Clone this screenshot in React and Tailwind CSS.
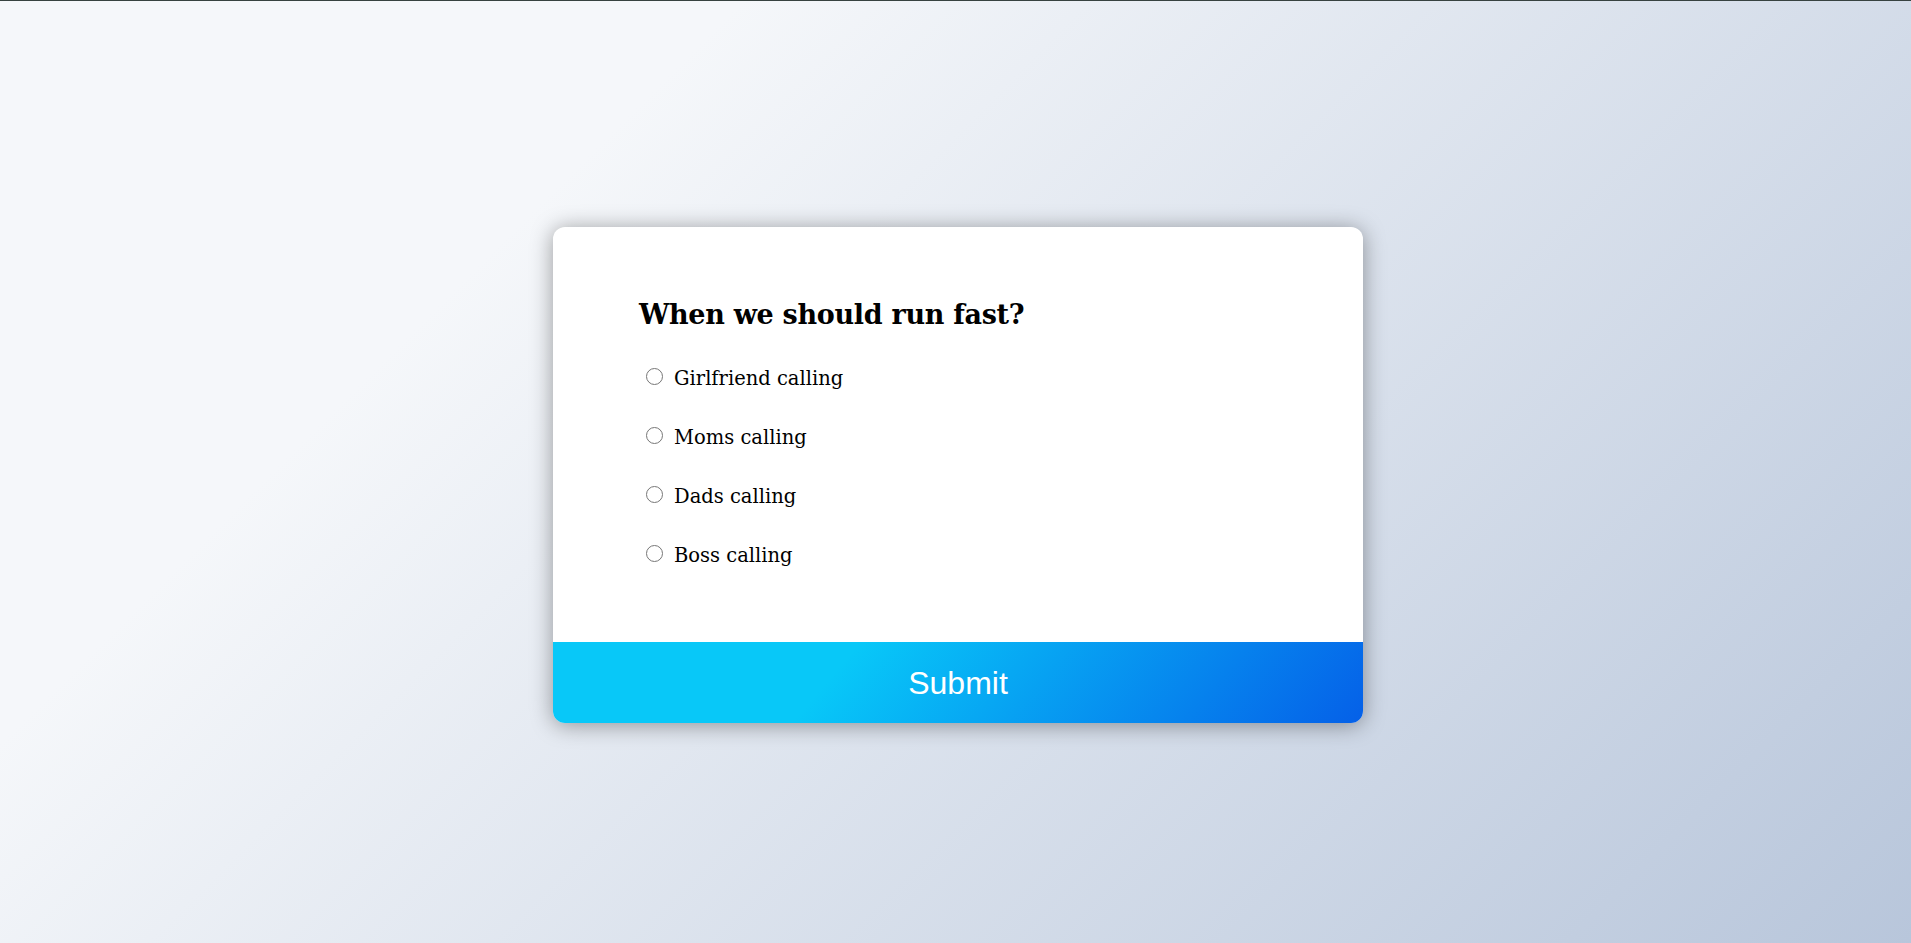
import React, { useState } from 'react';

const options = ['Girlfriend calling', 'Moms calling', 'Dads calling', 'Boss calling'];

export default function App() {
  const [answer, setAnswer] = useState(null);

  return (
    <div className="min-h-screen border-t border-[#374240] bg-[linear-gradient(315deg,#b8c6db_0%,#f5f7fa_74%)] flex justify-center pt-[226px] pb-[219px] pl-[5px]">
      <div className="w-[810px] h-[496px] bg-white rounded-[12px] overflow-hidden shadow-[0_2px_22px_rgba(0,0,0,0.38)] flex flex-col">
        <div className="flex-1 pl-[86px] pt-[68px] font-['DejaVu_Serif',serif] text-black">
          <h2 className="text-[27px] leading-[40px] font-bold tracking-[-0.3px]">When we should run fast?</h2>
          <div className="mt-[33px] flex flex-col gap-[37px]">
            {options.map((opt) => (
              <label key={opt} className="flex items-center gap-[11px] pl-[7px] text-[19.5px] leading-[22px] cursor-pointer">
                <input
                  type="radio"
                  name="q"
                  checked={answer === opt}
                  onChange={() => setAnswer(opt)}
                  className="w-[17px] h-[17px] m-0 -translate-y-[3px] shrink-0"
                />
                <span>{opt}</span>
              </label>
            ))}
          </div>
        </div>
        <button className="h-[81px] w-full bg-[linear-gradient(130deg,#08c8f8_35%,#0560e8_100%)] text-white text-[32px] font-['Liberation_Sans',Arial,sans-serif]">
          Submit
        </button>
      </div>
    </div>
  );
}
